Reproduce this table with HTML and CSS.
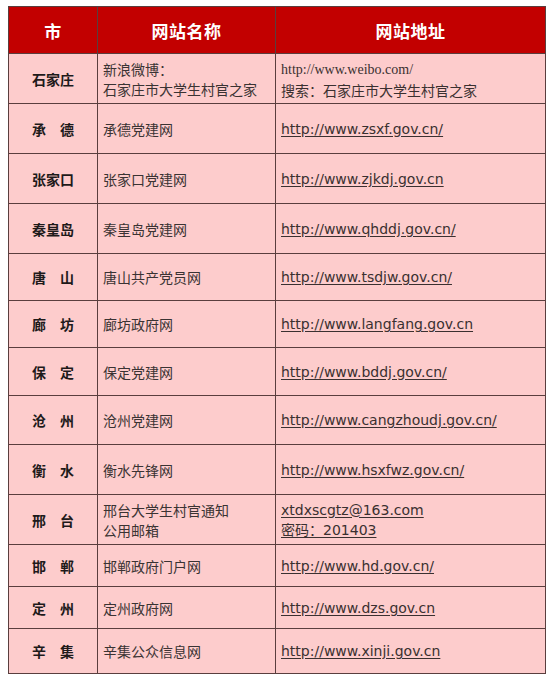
FILE: index.html
```html
<!DOCTYPE html>
<html lang="zh-CN">
<head>
<meta charset="utf-8">
<title>网站列表</title>
<link rel="stylesheet" href="styles.css">
</head>
<body>
<table class="sites">
  <colgroup>
    <col class="c-city">
    <col class="c-name">
    <col class="c-url">
  </colgroup>
  <thead>
    <tr class="h47">
      <th>市</th>
      <th>网站名称</th>
      <th>网站地址</th>
    </tr>
  </thead>
  <tbody>
    <tr class="h50">
      <td class="city">石家庄</td>
      <td class="name tall">新浪微博：<br>石家庄市大学生村官之家</td>
      <td class="url plain tall"><span class="serif">http://www.weibo.com/</span><br>搜索：石家庄市大学生村官之家</td>
    </tr>
    <tr class="h50">
      <td class="city">承　德</td>
      <td class="name">承德党建网</td>
      <td class="url"><a>http://www.zsxf.gov.cn/</a></td>
    </tr>
    <tr class="h50">
      <td class="city">张家口</td>
      <td class="name">张家口党建网</td>
      <td class="url"><a>http://www.zjkdj.gov.cn</a></td>
    </tr>
    <tr class="h50">
      <td class="city">秦皇岛</td>
      <td class="name">秦皇岛党建网</td>
      <td class="url"><a>http://www.qhddj.gov.cn/</a></td>
    </tr>
    <tr class="h47">
      <td class="city">唐　山</td>
      <td class="name">唐山共产党员网</td>
      <td class="url"><a>http://www.tsdjw.gov.cn/</a></td>
    </tr>
    <tr class="h47">
      <td class="city">廊　坊</td>
      <td class="name">廊坊政府网</td>
      <td class="url"><a>http://www.langfang.gov.cn</a></td>
    </tr>
    <tr class="h48">
      <td class="city">保　定</td>
      <td class="name">保定党建网</td>
      <td class="url"><a>http://www.bddj.gov.cn/</a></td>
    </tr>
    <tr class="h49">
      <td class="city">沧　州</td>
      <td class="name">沧州党建网</td>
      <td class="url"><a>http://www.cangzhoudj.gov.cn/</a></td>
    </tr>
    <tr class="h50">
      <td class="city">衡　水</td>
      <td class="name">衡水先锋网</td>
      <td class="url"><a>http://www.hsxfwz.gov.cn/</a></td>
    </tr>
    <tr class="h50">
      <td class="city">邢　台</td>
      <td class="name tall">邢台大学生村官通知<br>公用邮箱</td>
      <td class="url tall"><a>xtdxscgtz@163.com<br>密码：201403</a></td>
    </tr>
    <tr class="h42">
      <td class="city">邯　郸</td>
      <td class="name">邯郸政府门户网</td>
      <td class="url"><a>http://www.hd.gov.cn/</a></td>
    </tr>
    <tr class="h42">
      <td class="city">定　州</td>
      <td class="name">定州政府网</td>
      <td class="url"><a>http://www.dzs.gov.cn</a></td>
    </tr>
    <tr class="h45">
      <td class="city">辛　集</td>
      <td class="name">辛集公众信息网</td>
      <td class="url"><a>http://www.xinji.gov.cn</a></td>
    </tr>
  </tbody>
</table>
</body>
</html>
```

FILE: styles.css
```css
html, body {
  background: #ffffff;
}
body {
  margin: 6px 0 0 8px;
  font-family: "Noto Sans CJK SC", "Noto Sans", sans-serif;
}
.sites {
  border-collapse: collapse;
  table-layout: fixed;
  width: 537px;
  background: #fdcccc;
  border: 1px solid #4a3434;
}
.c-city { width: 89px; }
.c-name { width: 178px; }
.c-url { width: 270px; }

.sites th,
.sites td {
  border: 1px solid #5a3e3e;
  padding: 0 5px;
  vertical-align: middle;
}
.sites th {
  background: #c20000;
  color: #ffffff;
  font-size: 17px;
  font-weight: 700;
  text-align: center;
  letter-spacing: 0.5px;
}
.h42 { height: 42px; }
.h45 { height: 45px; }
.h47 { height: 47px; }
.h48 { height: 48px; }
.h49 { height: 49px; }
.h50 { height: 50px; }

.city {
  text-align: center;
  font-size: 14px;
  font-weight: 700;
  color: #1e1a1a;
}
.name {
  font-size: 14px;
  line-height: 18px;
  color: #3a3333;
}
.url {
  font-family: "DejaVu Sans", Verdana, "Noto Sans CJK SC", sans-serif;
  font-size: 14px;
  line-height: 18px;
  color: #3a3030;
}
.url a {
  color: #3a3030;
  text-decoration: underline;
  text-underline-offset: 2px;
}
.url.plain {
  font-family: "Noto Sans CJK SC", sans-serif;
}
.serif {
  font-family: "Liberation Serif", "Noto Sans CJK SC", serif;
}
.tall {
  line-height: 20px;
}
```
